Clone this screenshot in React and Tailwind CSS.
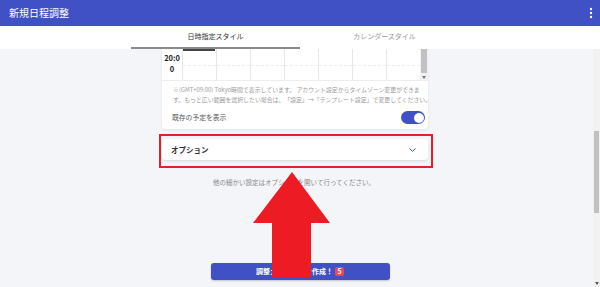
import React from "react";

const font = { fontFamily: '"Noto Sans CJK JP", "Noto Sans", sans-serif' };

export default function App() {
  const cols = [0, 1, 2, 3, 4, 5, 6];
  return (
    <div className="w-[600px] h-[287px] overflow-hidden flex flex-col bg-white" style={font}>
      {/* Header */}
      <div className="h-[26px] bg-[#3f51c5] flex items-center justify-between pl-[9px] pr-[7px] shrink-0">
        <span className="text-white text-[10px] leading-none">新規日程調整</span>
        <svg width="4" height="12" viewBox="0 0 4 12">
          <circle cx="2" cy="2" r="1.2" fill="#fff" />
          <circle cx="2" cy="6" r="1.2" fill="#fff" />
          <circle cx="2" cy="10" r="1.2" fill="#fff" />
        </svg>
      </div>
      {/* Tabs */}
      <div className="h-[23px] bg-white flex justify-center shrink-0">
        <div className="w-[169px] flex flex-col">
          <div className="flex-1 flex items-center justify-center text-[7px] text-[#333]">日時指定スタイル</div>
          <div className="h-[2px] bg-[#8a8a8a]" />
        </div>
        <div className="w-[169px] flex flex-col">
          <div className="flex-1 flex items-center justify-center text-[7px] text-[#999]">カレンダースタイル</div>
          <div className="h-[2px]" />
        </div>
      </div>
      {/* Content */}
      <div className="flex flex-1 min-h-0">
        <div className="flex-1 relative bg-[#f4f5f9] overflow-hidden">
          <div className="w-[266px] ml-[162px] flex flex-col">
            {/* calendar card */}
            <div className="bg-white rounded-b-[4px] shadow-[0_1px_3px_rgba(0,0,0,0.08)] flex flex-col">
              <div className="h-[31px] flex relative">
                <div className="w-[20px] flex flex-col items-center pt-[3px] text-[7.5px] font-bold text-[#222] leading-[11px]">
                  <span>20:0</span>
                  <span>0</span>
                </div>
                <div className="flex-1 flex flex-col">
                  <div className="flex flex-1">
                    {cols.map((c) => (
                      <div key={c} className="w-[34px] border-l border-[#e6e6e6] flex flex-col">
                        {c === 0 ? <div className="h-[2px] w-[32px] bg-[#444]" /> : null}
                        <div className="mt-auto mb-[14px] border-t border-dashed border-[#eeeeee]" />
                      </div>
                    ))}
                  </div>
                </div>
                <div className="w-[8px] bg-[#f1f1f1] flex flex-col">
                  <div className="h-[24px] bg-[#c1c1c1] mx-[1px]" />
                  <div className="mt-auto mb-[1px] flex justify-center">
                    <svg width="4" height="3" viewBox="0 0 4 3"><path d="M0 0H4L2 3Z" fill="#777" /></svg>
                  </div>
                </div>
              </div>
              <div className="border-t border-[#eeeeee] pl-[11px] pt-[4px] text-[5.9px] leading-[10px] text-[#9a9a9a] whitespace-nowrap flex flex-col">
                <span>※(GMT+09:00) Tokyo時間で表示しています。 アカウント設定からタイムゾーン変更ができま</span>
                <span>す。もっと広い範囲を選択したい場合は、「設定」→「テンプレート設定」で変更してください。</span>
              </div>
              <div className="flex items-center justify-between pl-[10px] pr-[3px] pt-[6px] pb-[5px]">
                <span className="text-[6.8px] text-[#555]">既存の予定を表示</span>
                <div className="w-[24px] h-[13px] rounded-full bg-[#3f51c5] flex items-center justify-end pr-[1.5px]">
                  <div className="w-[10px] h-[10px] rounded-full bg-white" />
                </div>
              </div>
            </div>
            {/* options */}
            <div className="mt-[5px] -ml-[3px] -mr-[5px] border-2 border-[#e3202b] pl-[1px] pr-[3px] pt-[3px] pb-[6px]">
              <div className="h-[21px] bg-white rounded-[4px] shadow-[0_1px_3px_rgba(0,0,0,0.12)] flex items-center justify-between pl-[9px] pr-[12px]">
                <span className="text-[7.5px] font-bold text-[#333]">オプション</span>
                <svg width="7" height="4" viewBox="0 0 7 4"><path d="M0.5 0.5L3.5 3.3L6.5 0.5" stroke="#3f51c5" strokeWidth="1" fill="none" /></svg>
              </div>
            </div>
            <div className="mt-[10px] text-center text-[6.5px] text-[#888] -ml-[2px]">他の細かい設定はオプションを開いて行ってください。</div>
          </div>
          <div className="mt-[75px] flex justify-center pl-[7px]">
            <div className="w-[179px] h-[17px] rounded-[3px] bg-[#3f51c5] shadow-[0_1px_2px_rgba(0,0,0,0.2)] flex items-center justify-center gap-[2px]">
              <span className="text-white text-[7px] font-bold">調整カレンダーを作成！</span>
              <span className="w-[9px] h-[9px] rounded-[2px] bg-[#f0474b] text-white text-[7px] font-bold flex items-center justify-center leading-none">5</span>
            </div>
          </div>
          <svg className="absolute left-0 top-0" width="593" height="238" viewBox="0 0 593 238">
            <polygon points="292,123 330,174 311,174 311,228 272,228 272,174 253,174" fill="#ed1c24" />
          </svg>
        </div>
        <div className="w-[7px] bg-[#f1f1f1] flex flex-col">
          <div className="mt-[82px] h-[82px] bg-[#c1c1c1] mx-[1px]" />
          <div className="mt-auto mb-[2px] flex justify-center">
            <svg width="4" height="3" viewBox="0 0 4 3"><path d="M0 0H4L2 3Z" fill="#555" /></svg>
          </div>
        </div>
      </div>
    </div>
  );
}
